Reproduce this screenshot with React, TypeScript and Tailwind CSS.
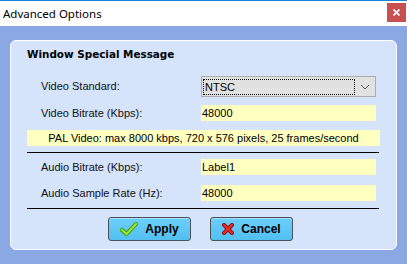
import React from "react";

const fieldRow = "flex items-center";

const CheckIcon = () => (
  <svg width="18" height="14" viewBox="0 0 18 14">
    <path d="M2 8 L6.5 12 L16 2" fill="none" stroke="#3f9a0c" strokeWidth="4" strokeLinecap="square" />
    <path d="M2 8 L6.5 12 L16 2" fill="none" stroke="#9be82f" strokeWidth="2" strokeLinecap="square" />
  </svg>
);

const CrossIcon = () => (
  <svg width="12" height="12" viewBox="0 0 12 12">
    <path d="M2 2 L10 10 M10 2 L2 10" fill="none" stroke="#8a0c0c" strokeWidth="4" strokeLinecap="square" />
    <path d="M2 2 L10 10 M10 2 L2 10" fill="none" stroke="#f22a2a" strokeWidth="2" strokeLinecap="square" />
  </svg>
);

const Field = ({ label, value }: { label: string; value: string }) => (
  <div className={fieldRow}>
    <div className="w-[174px] pl-[14px] text-[11px] text-[#111]">{label}</div>
    <div className="w-[175px] h-[16px] bg-[#ffffc0] pl-[1px] text-[11px] leading-[16px] text-black">{value}</div>
  </div>
);

const WinButton = ({ icon, label }: { icon: React.ReactNode; label: string }) => (
  <button className="w-[83px] h-[24px] rounded-[3px] border border-[#4d5157] bg-gradient-to-b from-[#6ccffa] to-[#52bff2] shadow-[inset_0_1px_0_#9fe0fd] flex items-center justify-center gap-[7px] text-[12px] font-bold text-black">
    {icon}
    <span>{label}</span>
  </button>
);

export default function App() {
  return (
    <div
      className="w-[407px] h-[264px] overflow-hidden bg-[#8aa8e4] border-t border-[#1883d7]"
      style={{ fontFamily: "'Liberation Sans', Arial, sans-serif" }}
    >
      <div className="h-[25px] bg-white flex items-center justify-between pl-[3px] pr-[1px]">
        <span className="text-[11.5px] text-black" style={{ fontFamily: "'Noto Sans', sans-serif" }}>
          Advanced Options
        </span>
        <div className="w-[19px] h-[19px] bg-[#c75050] flex items-center justify-center mb-[2px]">
          <svg width="7" height="7" viewBox="0 0 7 7">
            <path d="M0.5 0.5 L6.5 6.5 M6.5 0.5 L0.5 6.5" stroke="white" strokeWidth="1.6" />
          </svg>
        </div>
      </div>

      <div className="pt-[14px] pl-[10px]">
        <div className="w-[387px] h-[210px] bg-[#d5e3fb] border border-white rounded-[6px] px-[16px] pt-[6px]">
          <div className="text-[10.4px] font-bold text-black h-[14px] leading-[14px]" style={{ fontFamily: "'DejaVu Sans', sans-serif" }}>
            Window Special Message
          </div>

          <div className="flex flex-col mt-[15px]">
            <div className={fieldRow}>
              <div className="w-[174px] pl-[14px] text-[11px] text-[#111]">Video Standard:</div>
              <div className="w-[175px] h-[21px] bg-[#e1e1e1] border border-[#adadad] flex items-center p-[1px]">
                <div className="flex-1 h-[16px] border border-dotted border-black text-[11px] leading-[14px] pl-[1px] text-black">
                  NTSC
                </div>
                <svg width="18" height="10" viewBox="0 0 18 10" className="ml-[1px]">
                  <path d="M5 3 L9 7 L13 3" fill="none" stroke="#555" strokeWidth="1" />
                </svg>
              </div>
            </div>

            <div className="mt-[8px]">
              <Field label="Video Bitrate (Kbps):" value="48000" />
            </div>

            <div className="mt-[8px] h-[16px] bg-[#ffffc0] text-center text-[11px] leading-[16px] text-black">
              PAL Video: max 8000 kbps, 720 x 576 pixels, 25 frames/second
            </div>

            <div className="mt-[6px] h-px bg-black mr-[1px]" />

            <div className="mt-[6px]">
              <Field label="Audio Bitrate (Kbps):" value="Label1" />
            </div>
            <div className="mt-[10px]">
              <Field label="Audio Sample Rate (Hz):" value="48000" />
            </div>

            <div className="mt-[6px] h-px bg-black mr-[1px]" />

            <div className="mt-[8px] flex justify-center gap-[19px] pr-[6px]">
              <WinButton icon={<CheckIcon />} label="Apply" />
              <WinButton icon={<CrossIcon />} label="Cancel" />
            </div>
          </div>
        </div>
      </div>
    </div>
  );
}
